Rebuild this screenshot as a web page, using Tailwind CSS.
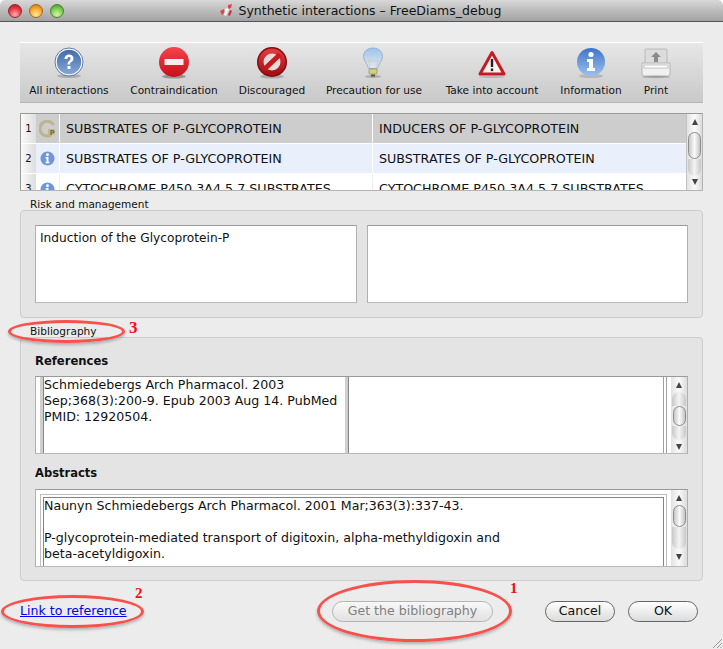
<!DOCTYPE html>
<html><head><meta charset="utf-8"><script src="https://cdn.jsdelivr.net/npm/@tailwindcss/browser@4"></script></head>
<body class="m-0 bg-white">
<div class="relative w-[723px] h-[649px] overflow-hidden bg-[#ececec] rounded-t-[5px] font-['DejaVu_Sans',sans-serif] text-black">
  <!-- title bar -->
  <div class="relative h-[22px] bg-gradient-to-b from-[#d8d8d8] to-[#a2a2a2] border-b border-[#555] flex items-center justify-center gap-[5px] pr-[3px] rounded-t-[5px]">
    <div class="absolute left-[8px] top-[4px] flex gap-[7px]">
      <div class="w-[14px] h-[14px] rounded-full border border-[#8a2a30] bg-[radial-gradient(circle_at_50%_80%,#ffb0b4,#ee3844_55%,#b01020)]"></div>
      <div class="w-[14px] h-[14px] rounded-full border border-[#9a6a1c] bg-[radial-gradient(circle_at_50%_80%,#ffe89a,#f8a830_55%,#c87008)]"></div>
      <div class="w-[14px] h-[14px] rounded-full border border-[#4d8030] bg-[radial-gradient(circle_at_50%_80%,#d4f4a8,#7ccc50_55%,#3c9020)]"></div>
    </div>
    <svg width="15" height="15" viewBox="0 0 15 15"><path d="M1 8l4-2 1 3-3 3z" fill="#e8424a"/><path d="M9 2l4-1-1 4-3 1z" fill="#e8424a"/><path d="M6 6l3-1 1 2-3 6-2-1z" fill="#f4f4f4"/><path d="M11 7l2 1-2 5-2-1z" fill="#c8383e"/></svg>
    <span class="text-[12.5px] leading-[21px] text-[#111]">Synthetic interactions – FreeDiams_debug</span>
  </div>

  <div class="px-[20px] pt-[20px]">
    <!-- toolbar -->
    <div class="h-[61px] border-t border-white border-b border-b-[#b4b4b4] bg-gradient-to-b from-[#e6e6e6] to-[#c9c9c9] relative flex text-[10.6px] text-[#111]">
      <div class="w-[98px] flex flex-col items-center">
        <svg class="mt-[4px]" width="32" height="32" viewBox="0 0 32 32"><ellipse cx="16" cy="29" rx="12" ry="2" fill="#000" opacity=".18"/><defs><linearGradient id="q" x1="0" y1="0" x2="0" y2="1"><stop offset="0" stop-color="#3f6ba8"/><stop offset="1" stop-color="#86a8d6"/></linearGradient></defs><circle cx="16" cy="15" r="13" fill="url(#q)" stroke="#fff" stroke-width="1.5"/><circle cx="16" cy="15" r="14" fill="none" stroke="#3a5f96" stroke-width=".8"/><path d="M11.500 12c0-3 2-4.500 4.500-4.500s4.500 1.500 4.500 4c0 3.500-3.500 3-3.500 6h-2.500c0-4 3-3.500 3-6 0-1-.7-1.500-1.500-1.500s-1.500.6-1.500 2z" fill="#fff"/><rect x="14.500" y="19" width="3" height="3" fill="#fff"/></svg>
        <span class="mt-[4px] leading-[14px] whitespace-nowrap">All interactions</span>
      </div>
      <div class="w-[112px] flex flex-col items-center">
        <svg class="mt-[4px]" width="32" height="32" viewBox="0 0 32 32"><ellipse cx="16" cy="29.500" rx="12" ry="2" fill="#000" opacity=".3"/><defs><linearGradient id="r" x1="0" y1="0" x2="0" y2="1"><stop offset="0" stop-color="#f4444c"/><stop offset="1" stop-color="#c4101a"/></linearGradient></defs><circle cx="16" cy="15" r="15" fill="url(#r)"/><rect x="6.500" y="12" width="19" height="6" fill="#f6eeee"/></svg>
        <span class="mt-[4px] leading-[14px] whitespace-nowrap">Contraindication</span>
      </div>
      <div class="w-[84px] flex flex-col items-center">
        <svg class="mt-[4px]" width="32" height="32" viewBox="0 0 32 32"><ellipse cx="16" cy="29.500" rx="12" ry="2" fill="#000" opacity=".2"/><defs><linearGradient id="d" x1="0" y1="0" x2="0" y2="1"><stop offset="0" stop-color="#e0383e"/><stop offset="1" stop-color="#a81016"/></linearGradient></defs><circle cx="16" cy="15" r="15" fill="#7e0c10"/><circle cx="16" cy="15" r="11" fill="#e4dad8" stroke="url(#d)" stroke-width="5"/><path d="M8 22.500L24 7.500" stroke="#c8181e" stroke-width="5"/></svg>
        <span class="mt-[4px] leading-[14px] whitespace-nowrap">Discouraged</span>
      </div>
      <div class="w-[118px] flex flex-col items-center">
        <svg class="mt-[2px]" width="32" height="34" viewBox="0 0 32 34"><defs><linearGradient id="b" x1="0" y1="0" x2="0" y2="1"><stop offset="0" stop-color="#a0c2ec"/><stop offset="1" stop-color="#e2e8ee"/></linearGradient></defs><ellipse cx="16" cy="31.500" rx="8" ry="1.500" fill="#000" opacity=".2"/><path d="M16 3c6 0 9.500 4 9.500 8.500 0 4.500-4 7-5 12h-9c-1-5-5-7.500-5-12C6.500 7 10 3 16 3z" fill="url(#b)" stroke="#8aa8cc" stroke-width=".8"/><path d="M13 23l-2-8 3 2 2-2 2 2 3-2-2 8" fill="none" stroke="#c8ccb8" stroke-width=".7"/><rect x="12" y="24" width="8" height="5" rx="1" fill="#d8cf80" stroke="#8a8450" stroke-width=".6"/><path d="M14 29.500h4v2h-4z" fill="#55523a"/></svg>
        <span class="mt-[4px] ml-[2px] leading-[14px] whitespace-nowrap">Precaution for use</span>
      </div>
      <div class="w-[116px] flex flex-col items-center ml-[2px]">
        <svg class="mt-[4px]" width="32" height="32" viewBox="0 0 32 32"><path d="M16 5.500L28 27H4z" fill="#f6f2f0" stroke="#c41c24" stroke-width="3" stroke-linejoin="round"/><rect x="14.800" y="12" width="2.400" height="8" fill="#222"/><rect x="14.800" y="21.500" width="2.400" height="2.600" fill="#222"/><ellipse cx="16" cy="30" rx="13" ry="1" fill="#000" opacity=".15"/></svg>
        <span class="mt-[4px] leading-[14px] whitespace-nowrap">Take into account</span>
      </div>
      <div class="w-[82px] flex flex-col items-center">
        <svg class="mt-[4px]" width="32" height="32" viewBox="0 0 32 32"><ellipse cx="16" cy="29" rx="12" ry="2" fill="#000" opacity=".15"/><defs><linearGradient id="i" x1="0" y1="0" x2="0" y2="1"><stop offset="0" stop-color="#3f74c8"/><stop offset="1" stop-color="#9cc0ee"/></linearGradient></defs><circle cx="16" cy="15" r="14" fill="url(#i)"/><circle cx="16" cy="7.500" r="2.600" fill="#fff"/><path d="M12 12h6v9h2v3h-8v-3h2v-6h-2z" fill="#fff"/></svg>
        <span class="mt-[4px] leading-[14px] whitespace-nowrap">Information</span>
      </div>
      <div class="w-[48px] flex flex-col items-center">
        <svg class="mt-[4px]" width="32" height="32" viewBox="0 0 32 32"><rect x="5" y="2" width="22" height="16" rx="1" fill="#dcdcdc" stroke="#b0b0b0" stroke-width=".8"/><path d="M16 5l-5 5h3v5h4v-5h3z" fill="#8a8a8a"/><path d="M2 16h28v11a2 2 0 0 1-2 2H4a2 2 0 0 1-2-2z" fill="#f0f0f0" stroke="#a8a8a8" stroke-width=".8"/><rect x="4" y="18" width="24" height="3" fill="#fff" stroke="#a0a0a0" stroke-width=".6"/><ellipse cx="16" cy="30" rx="14" ry="1.200" fill="#000" opacity=".2"/></svg>
        <span class="mt-[4px] leading-[14px] whitespace-nowrap">Print</span>
      </div>
    </div>

    <!-- interactions table -->
    <div class="mt-[10px] h-[78px] border border-[#9a9a9a] border-b-[#b4b4b4] border-r-[#b4b4b4] bg-white flex overflow-hidden text-[12.7px] leading-[30px] text-[#111]">
      <div class="flex-1 min-w-0">
        <div class="flex h-[30px] bg-[#cdcdcd] border-b border-white">
          <div class="w-[15px] bg-gradient-to-r from-[#fafafa] to-[#dedede] text-[10px] text-center shrink-0">1</div>
          <div class="w-[24px] shrink-0 border-r border-white flex items-center justify-center">
            <svg width="18" height="18" viewBox="0 0 16 16"><path d="M13 4.500A6.500 6.500 0 1 0 11 13" fill="none" stroke="#bdb38c" stroke-width="2.800"/><path d="M8 8h6v5H8z" fill="#c4b98c"/><text x="9.500" y="13" font-size="6" font-weight="700" fill="#6e6748">P</text></svg>
          </div>
          <div class="w-[313px] shrink-0 pl-[6px] border-r border-white whitespace-nowrap">SUBSTRATES OF P-GLYCOPROTEIN</div>
          <div class="flex-1 pl-[6px] whitespace-nowrap">INDUCERS OF P-GLYCOPROTEIN</div>
        </div>
        <div class="flex h-[30px] bg-[#e9f0fc] border-b border-white">
          <div class="w-[15px] bg-gradient-to-r from-[#fafafa] to-[#dedede] text-[10px] text-center shrink-0">2</div>
          <div class="w-[24px] shrink-0 border-r border-white flex items-center justify-center">
            <svg width="15" height="15" viewBox="0 0 32 32"><circle cx="16" cy="16" r="15" fill="#6f97d8"/><circle cx="16" cy="8" r="3" fill="#fff"/><path d="M12 13h6v10h2v3h-8v-3h2v-7h-2z" fill="#fff"/></svg>
          </div>
          <div class="w-[313px] shrink-0 pl-[6px] border-r border-white whitespace-nowrap">SUBSTRATES OF P-GLYCOPROTEIN</div>
          <div class="flex-1 pl-[6px] whitespace-nowrap">SUBSTRATES OF P-GLYCOPROTEIN</div>
        </div>
        <div class="flex h-[30px] bg-white">
          <div class="w-[15px] bg-gradient-to-r from-[#fafafa] to-[#dedede] text-[10px] text-center shrink-0">3</div>
          <div class="w-[24px] shrink-0 border-r border-[#eee] flex items-center justify-center">
            <svg width="15" height="15" viewBox="0 0 32 32"><circle cx="16" cy="16" r="15" fill="#6f97d8"/><circle cx="16" cy="8" r="3" fill="#fff"/><path d="M12 13h6v10h2v3h-8v-3h2v-7h-2z" fill="#fff"/></svg>
          </div>
          <div class="w-[313px] shrink-0 pl-[6px] border-r border-[#eee] whitespace-nowrap overflow-hidden">CYTOCHROME P450 3A4 5 7 SUBSTRATES</div>
          <div class="flex-1 pl-[6px] whitespace-nowrap overflow-hidden">CYTOCHROME P450 3A4 5 7 SUBSTRATES</div>
        </div>
      </div>
      <!-- scrollbar -->
      <div class="w-[16px] shrink-0 border-l border-[#c4c4c4] bg-gradient-to-r from-[#e2e2e2] via-[#fafafa] to-[#dcdcdc] flex flex-col items-center relative">
        <span class="mt-[5px] w-0 h-0 border-x-[3px] border-x-transparent border-b-[6px] border-b-[#444]"></span>
        <div class="mt-[7px] w-[13px] h-[27px] rounded-[7px] border border-[#8c8c8c] bg-gradient-to-r from-[#c8c8c8] via-[#fafafa] to-[#c4c4c4]"></div>
        <div class="w-[13px] h-[17px] rounded-b-[7px] bg-gradient-to-r from-[#c8c8c8] via-[#f4f4f4] to-[#c8c8c8]"></div>
        <span class="mt-[3px] w-0 h-0 border-x-[3px] border-x-transparent border-t-[6px] border-t-[#444]"></span>
      </div>
    </div>

    <!-- Risk and management -->
    <div class="ml-[10px] mt-[7px] text-[10.5px] leading-[12px] text-[#111]">Risk and management</div>
    <div class="h-[108px] bg-[#e4e4e4] border border-[#cdcdcd] rounded-[4px] px-[14px] pt-[14px] flex gap-[10px]">
      <div class="w-[322px] h-[78px] bg-white border border-[#9a9a9a] border-b-[#b8b8b8] border-x-[#b0b0b0] px-[4px] py-[4px] text-[12.2px] leading-[17px] text-[#111] whitespace-nowrap">Induction of the Glycoprotein-P</div>
      <div class="w-[321px] h-[78px] bg-white border border-[#9a9a9a] border-b-[#b8b8b8] border-x-[#b0b0b0]"></div>
    </div>

    <!-- Bibliography -->
    <div class="ml-[10px] mt-[7px] text-[10.6px] leading-[12px] text-[#111]">Bibliography</div>
    <div class="h-[244px] bg-[#e4e4e4] border border-[#cdcdcd] rounded-[4px] px-[14px] pt-[15px]">
      <div class="text-[11.6px] font-bold leading-[16px] text-[#111]">References</div>
      <div class="mt-[7px] h-[78px] bg-white border border-[#9a9a9a] border-b-[#b8b8b8] border-x-[#b0b0b0] flex overflow-hidden text-[12.6px] leading-[16px] text-[#111]">
        <div class="w-[4px] shrink-0"></div>
        <div class="w-[3px] shrink-0 bg-[#cfcfcf]"></div>
        <div class="w-[302px] shrink-0 border-l border-[#858585] whitespace-nowrap">Schmiedebergs Arch Pharmacol. 2003<br>Sep;368(3):200-9. Epub 2003 Aug 14. PubMed<br>PMID: 12920504.</div>
        <div class="w-[3px] shrink-0 bg-[#cfcfcf]"></div>
        <div class="flex-1 border-l border-[#858585]"></div>
        <div class="w-[4px] shrink-0 border-x border-[#a0a0a0]"></div>
        <div class="w-[4px] shrink-0"></div>
        <div class="w-[16px] shrink-0 bg-gradient-to-r from-[#e2e2e2] via-[#fafafa] to-[#dcdcdc] flex flex-col items-center">
          <span class="mt-[5px] w-0 h-0 border-x-[3px] border-x-transparent border-b-[6px] border-b-[#444]"></span>
          <div class="mt-[4px] w-[14px] h-[14px] rounded-t-[7px] bg-gradient-to-r from-[#c8c8c8] via-[#f4f4f4] to-[#c8c8c8]"></div>
          <div class="w-[13px] h-[20px] rounded-[7px] border border-[#8c8c8c] bg-gradient-to-r from-[#c8c8c8] via-[#fafafa] to-[#c4c4c4]"></div>
          <div class="w-[14px] h-[14px] rounded-b-[7px] bg-gradient-to-r from-[#c8c8c8] via-[#f4f4f4] to-[#c8c8c8]"></div>
          <span class="mt-[4px] w-0 h-0 border-x-[3px] border-x-transparent border-t-[6px] border-t-[#444]"></span>
        </div>
      </div>
      <div class="mt-[11px] text-[11.5px] font-bold leading-[16px] text-[#111]">Abstracts</div>
      <div class="mt-[8px] h-[78px] bg-white border border-[#9a9a9a] border-b-[#b8b8b8] border-x-[#b0b0b0] flex overflow-hidden text-[12.6px] leading-[16px] text-[#111]">
        <div class="flex-1 min-w-0 pl-[4px] pt-[4px]">
          <div class="h-full border border-b-0 border-[#bdbdbd] pl-[2px] pr-[2px] pt-[2px]">
            <div class="h-full border border-b-0 border-[#858585] whitespace-nowrap">Naunyn Schmiedebergs Arch Pharmacol. 2001 Mar;363(3):337-43.<br><br>P-glycoprotein-mediated transport of digitoxin, alpha-methyldigoxin and<br>beta-acetyldigoxin.</div>
          </div>
        </div>
        <div class="w-[4px] shrink-0"></div>
        <div class="w-[16px] shrink-0 bg-gradient-to-r from-[#e2e2e2] via-[#fafafa] to-[#dcdcdc] flex flex-col items-center">
          <span class="mt-[5px] w-0 h-0 border-x-[3px] border-x-transparent border-b-[6px] border-b-[#444]"></span>
          <div class="mt-[4px] w-[13px] h-[22px] rounded-[7px] border border-[#8c8c8c] bg-gradient-to-r from-[#c8c8c8] via-[#fafafa] to-[#c4c4c4]"></div>
          <div class="w-[14px] h-[22px] rounded-b-[7px] bg-gradient-to-r from-[#c8c8c8] via-[#f4f4f4] to-[#c8c8c8]"></div>
          <span class="mt-[5px] w-0 h-0 border-x-[3px] border-x-transparent border-t-[6px] border-t-[#444]"></span>
        </div>
      </div>
    </div>

    <!-- footer -->
    <div class="mt-[20px] h-[21px] flex items-center text-[12.6px]">
      <a class="text-[#0000ee] underline w-[312px]">Link to reference</a>
      <div class="w-[161px] h-[21px] rounded-[11px] border border-[#b4b4b4] bg-gradient-to-b from-[#f8f8f8] to-[#e2e2e2] text-[#808080] flex items-center justify-center">Get the bibliography</div>
      <div class="ml-[52px] w-[70px] h-[21px] rounded-[11px] border border-[#666] bg-gradient-to-b from-[#ffffff] to-[#dcdcdc] text-[#111] flex items-center justify-center">Cancel</div>
      <div class="ml-[13px] w-[70px] h-[21px] rounded-[11px] border border-[#666] bg-gradient-to-b from-[#ffffff] to-[#dcdcdc] text-[#111] flex items-center justify-center">OK</div>
    </div>
  </div>

  <!-- resize grip -->
  <svg class="absolute right-0 bottom-0" width="12" height="12" viewBox="0 0 12 12"><path d="M11 2L2 11M11 6L6 11M11 9.500L9.500 11" stroke="#9a9a9a" stroke-width="1"/></svg>

  <!-- red annotations -->
  <div class="absolute left-[317px] top-[580px] w-[195px] h-[62px] rounded-[50%] border-[3px] border-[#f8504a] shadow-[0_2px_3px_rgba(0,0,0,0.25)]"></div>
  <div class="absolute left-[1px] top-[595px] w-[143px] h-[33px] rounded-[50%] border-[3px] border-[#f8504a] shadow-[0_2px_3px_rgba(0,0,0,0.25)]"></div>
  <div class="absolute left-[8px] top-[320px] w-[117px] h-[23px] rounded-[50%] border-[3px] border-[#f8504a] shadow-[0_2px_3px_rgba(0,0,0,0.25)]"></div>
  <span class="absolute left-[129px] top-[318px] font-['Liberation_Serif',serif] font-bold text-[17px] leading-[19px] text-[#f01010]">3</span>
  <span class="absolute left-[135px] top-[585px] font-['Liberation_Serif',serif] font-bold text-[15px] leading-[17px] text-[#f01010]">2</span>
  <span class="absolute left-[510px] top-[580px] font-['Liberation_Serif',serif] font-bold text-[15px] leading-[17px] text-[#f01010]">1</span>
</div>
</body></html>
